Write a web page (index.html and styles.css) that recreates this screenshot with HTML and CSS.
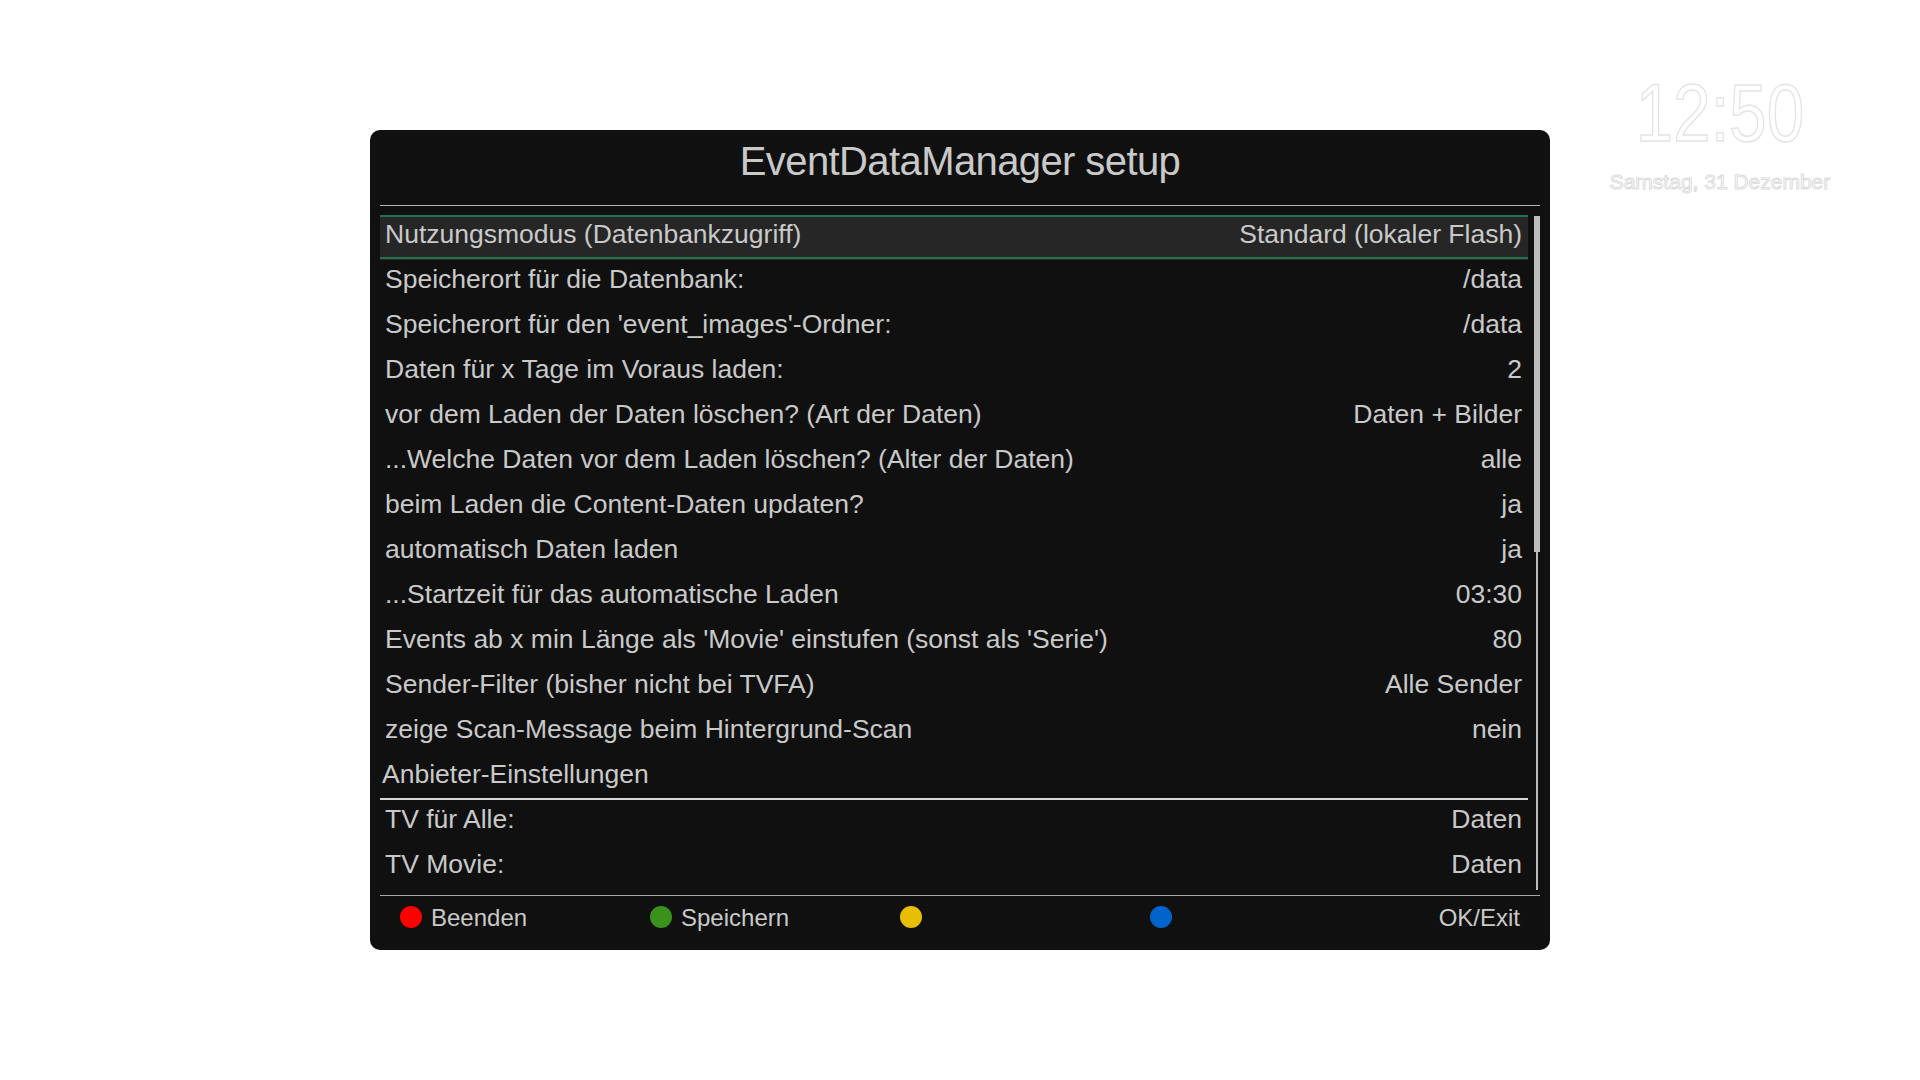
FILE: index.html
```html
<!DOCTYPE html>
<html lang="de">
<head>
<meta charset="utf-8">
<title>EventDataManager setup</title>
<link rel="stylesheet" href="styles.css">
</head>
<body>
<div class="screen">
  <div class="spacer"></div>
  <div class="panel">
    <div class="title">EventDataManager setup</div>
    <div class="title-sep"></div>
    <div class="list-wrap">
      <div class="list">
        <div class="row selected"><span class="label">Nutzungsmodus (Datenbankzugriff)</span><span class="value">Standard (lokaler Flash)</span></div>
        <div class="row"><span class="label">Speicherort für die Datenbank:</span><span class="value">/data</span></div>
        <div class="row"><span class="label">Speicherort für den 'event_images'-Ordner:</span><span class="value">/data</span></div>
        <div class="row"><span class="label">Daten für x Tage im Voraus laden:</span><span class="value">2</span></div>
        <div class="row"><span class="label">vor dem Laden der Daten löschen? (Art der Daten)</span><span class="value">Daten + Bilder</span></div>
        <div class="row"><span class="label">...Welche Daten vor dem Laden löschen? (Alter der Daten)</span><span class="value">alle</span></div>
        <div class="row"><span class="label">beim Laden die Content-Daten updaten?</span><span class="value">ja</span></div>
        <div class="row"><span class="label">automatisch Daten laden</span><span class="value">ja</span></div>
        <div class="row"><span class="label">...Startzeit für das automatische Laden</span><span class="value">03:30</span></div>
        <div class="row"><span class="label">Events ab x min Länge als 'Movie' einstufen (sonst als 'Serie')</span><span class="value">80</span></div>
        <div class="row"><span class="label">Sender-Filter (bisher nicht bei TVFA)</span><span class="value">Alle Sender</span></div>
        <div class="row"><span class="label">zeige Scan-Message beim Hintergrund-Scan</span><span class="value">nein</span></div>
        <div class="row section"><span class="label">Anbieter-Einstellungen</span></div>
        <div class="row"><span class="label">TV für Alle:</span><span class="value">Daten</span></div>
        <div class="row"><span class="label">TV Movie:</span><span class="value">Daten</span></div>
      </div>
      <div class="scroll"></div>
    </div>
    <div class="footer">
      <div class="btn"><span class="dot red"></span><span>Beenden</span></div>
      <div class="btn"><span class="dot green"></span><span>Speichern</span></div>
      <div class="btn"><span class="dot yellow"></span></div>
      <div class="btn"><span class="dot blue"></span></div>
      <div class="okexit">OK/Exit</div>
    </div>
  </div>
  <div class="clock">
    <div class="time">12:50</div>
    <div class="date">Samstag, 31 Dezember</div>
  </div>
</div>
</body>
</html>
```
FILE: styles.css
```css
html, body {
  margin: 0;
  padding: 0;
  background: #ffffff;
}

.screen {
  width: 1920px;
  height: 1080px;
  display: grid;
  grid-template-columns: 370px 1180px 1fr;
  align-items: start;
  font-family: "Liberation Sans", Arial, sans-serif;
}

.panel {
  margin-top: 130px;
  width: 1180px;
  height: 820px;
  box-sizing: border-box;
  padding: 0 10px;
  background: #101010;
  border-radius: 10px;
  color: #c9c9c9;
  display: flex;
  flex-direction: column;
}

.title {
  height: 75px;
  line-height: 62px;
  font-size: 40px;
  letter-spacing: -0.6px;
  text-align: center;
  color: #c9c9c9;
}

.title-sep {
  height: 1px;
  background: #b4b4b4;
  margin-bottom: 9px;
}

.list-wrap {
  display: flex;
  height: 675px;
}

.list {
  width: 1148px;
  display: flex;
  flex-direction: column;
}

.row {
  height: 45px;
  box-sizing: border-box;
  display: flex;
  justify-content: space-between;
  padding: 0 6px 0 5px;
  font-size: 26.5px;
  line-height: 38px;
  white-space: nowrap;
}

.row.selected {
  background: linear-gradient(#22704f, #22704f) top / 100% 2px no-repeat,
              linear-gradient(#22704f, #22704f) 0 42px / 100% 2px no-repeat,
              #262626;
}

.row.section {
  padding-left: 2px;
  border-bottom: 2px solid #d6d6d6;
}

.scroll {
  width: 6px;
  margin-left: 6px;
  margin-top: 1px;
  background:
    linear-gradient(#bdbdbd, #bdbdbd) left top / 6px 336px no-repeat,
    linear-gradient(#bbbbbb, #bbbbbb) center top / 2px 100% no-repeat;
}

.footer {
  margin-top: 5px;
  border-top: 1px solid #a8a8a8;
  height: 54px;
  display: flex;
  align-items: flex-start;
  padding: 0 20px;
  font-size: 24px;
  line-height: 44px;
  color: #c9c9c9;
}

.btn {
  width: 250px;
  height: 44px;
  display: flex;
  align-items: center;
  gap: 9px;
}

.dot {
  width: 22px;
  height: 22px;
  border-radius: 50%;
  flex: none;
  margin-bottom: 2px;
}

.dot.red { background: #ff0000; }
.dot.green { background: #3a921d; }
.dot.yellow { background: #e7bf00; }
.dot.blue { background: #0064cc; }

.okexit {
  margin-left: auto;
}

.clock {
  padding-top: 73px;
  padding-right: 30px;
  text-align: center;
  color: #ffffff;
}

.time {
  font-size: 81px;
  line-height: 81px;
  transform: scaleX(0.83);
  -webkit-text-stroke: 1.5px #e4e4e4;
}

.date {
  margin-top: 17px;
  font-size: 21px;
  line-height: 21px;
  -webkit-text-stroke: 1px #dcdcdc;
}
```
